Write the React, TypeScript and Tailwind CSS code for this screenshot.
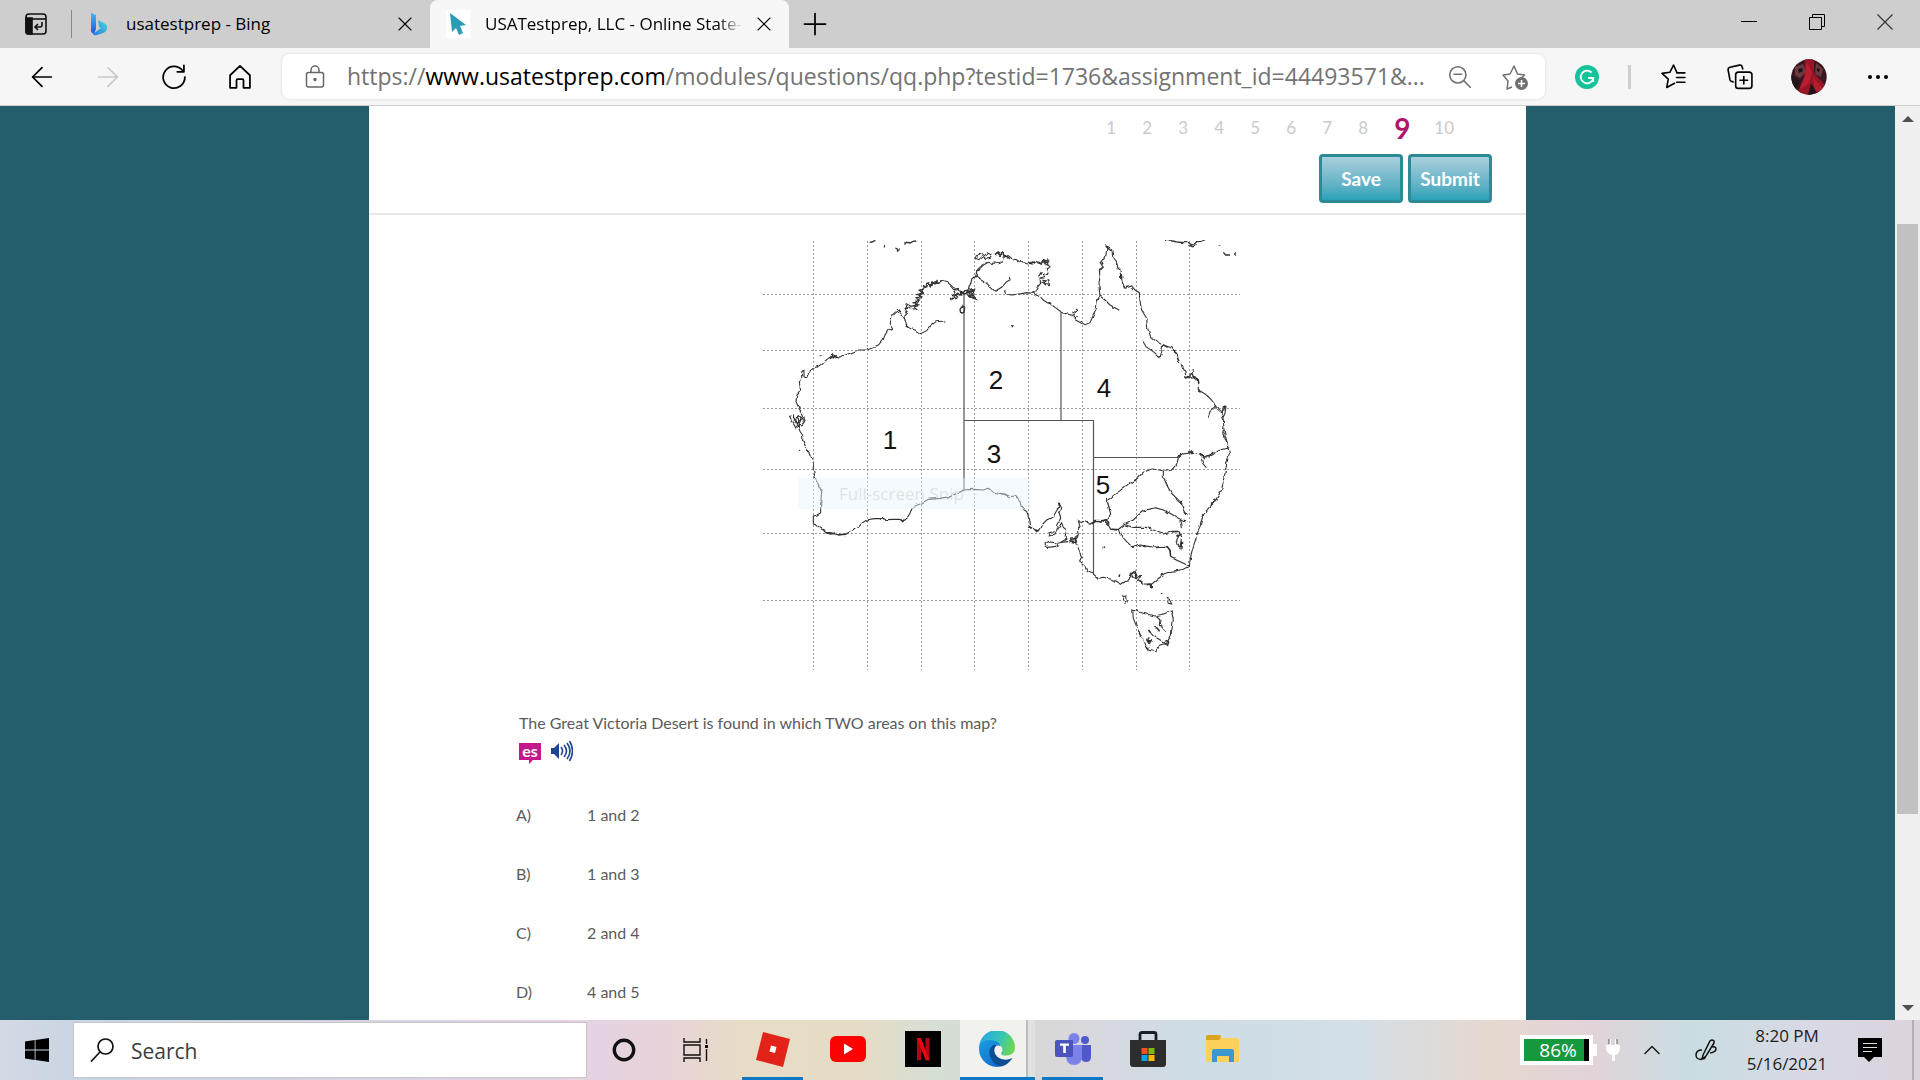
import React from "react";
import { ArrowLeft, ArrowRight, ChevronUp } from "lucide-react";

const ui = "font-['Open_Sans','Noto_Sans',sans-serif]";

function Stroke({ children, className = "size-7", label }: { children: React.ReactNode; className?: string; label?: string }) {
  return (
    <svg viewBox="0 0 24 24" className={className} fill="none" stroke="currentColor" strokeWidth="1.5" strokeLinecap="round" strokeLinejoin="round" aria-label={label} aria-hidden={!label}>
      {children}
    </svg>
  );
}

function TabStrip() {
  return (
    <header className="flex h-12 shrink-0 items-stretch bg-[#cecece] text-black">
      <div className="flex w-18 items-center justify-end">
        <button aria-label="Tab actions" className="mr-6">
          <svg viewBox="0 0 22 22" className="size-[22px]" fill="none" stroke="#111" strokeWidth="1.6">
            <rect x="1" y="1" width="20" height="20" rx="3" />
            <path d="M1 6h20" />
            <path d="M1 5h6v16H3q-2 0-2-2z" fill="#111" />
            <path d="M17 9v3q0 2-2 2h-5m3-3-3 3 3 3" />
          </svg>
        </button>
        <span className="h-7 w-px bg-[#888]" />
      </div>
      <div className="flex w-[358px] items-center">
        <svg viewBox="0 0 18 24" className="ml-[18px] h-6 w-[18px]">
          <defs>
            <linearGradient id="bingA" x1="0" y1="0" x2="0" y2="1">
              <stop offset="0" stopColor="#48b5f5" />
              <stop offset="1" stopColor="#1b56e0" />
            </linearGradient>
            <linearGradient id="bingB" x1="1" y1="0" x2="0" y2="1">
              <stop offset="0" stopColor="#46dfd0" />
              <stop offset="1" stopColor="#2376ea" />
            </linearGradient>
          </defs>
          <path d="M1 1l5 2v14l-2 5q-3-1-3-4z" fill="url(#bingA)" />
          <path d="M8 8l6 3q4 2 3 6-1 3-4 4l-6 2q-3 1-4-1l8-6-2-1z" fill="url(#bingB)" />
        </svg>
        <span className="ml-[18px] flex-1 truncate text-[17px]">usatestprep - Bing</span>
        <button aria-label="Close tab" className="mr-4">
          <Stroke className="size-[18px]"><path d="M4 4l16 16M20 4L4 20" /></Stroke>
        </button>
      </div>
      <div className="flex w-[359px] items-center rounded-t-lg bg-[#f7f7f7]">
        <span className="ml-4 grid h-7 w-6 place-items-center bg-white">
          <svg viewBox="0 0 18 24" className="h-6 w-[18px]">
            <path d="M1 1l16 12-6 1 3 7-4 2-3-7-4 4z" fill="#2a9db5" />
          </svg>
        </span>
        <span className="ml-[15px] w-[258px] text-[17px] whitespace-nowrap [mask-image:linear-gradient(to_right,black_90%,transparent)]">
          USATestprep, LLC - Online State-
        </span>
        <button aria-label="Close tab" className="ml-3">
          <Stroke className="size-[18px]"><path d="M4 4l16 16M20 4L4 20" /></Stroke>
        </button>
      </div>
      <button aria-label="New tab" className="ml-3">
        <Stroke><path d="M12 3v18M3 12h18" /></Stroke>
      </button>
      <div className="mr-px ml-auto flex items-center pb-1">
        <button aria-label="Minimize" className="grid w-[68px] place-items-center">
          <svg viewBox="0 0 16 16" className="size-4" stroke="#000"><path d="M0 7.5h16" /></svg>
        </button>
        <button aria-label="Restore" className="grid w-[68px] place-items-center">
          <svg viewBox="0 0 16 16" className="size-4" stroke="#000" fill="none"><path d="M.5 3.5h12v12H.5zM3.500 3.500V.5h12v12h-3" /></svg>
        </button>
        <button aria-label="Close" className="grid w-[68px] place-items-center">
          <svg viewBox="0 0 16 16" className="size-4" stroke="#333" strokeWidth="1.200"><path d="M.5.5l15 15M15.500.5l-15 15" /></svg>
        </button>
      </div>
    </header>
  );
}

function Toolbar() {
  return (
    <nav className="flex h-[58px] shrink-0 items-center border-b border-[#cfcfcf] bg-[#f6f6f6] text-black">
      <div className="flex w-[282px] items-center pl-[9px]">
        <button aria-label="Back" className="grid w-[66px] place-items-center"><ArrowLeft className="size-8" strokeWidth={1.3} /></button>
        <button aria-label="Forward" className="grid w-[66px] place-items-center text-[#c9c9c9]"><ArrowRight className="size-8" strokeWidth={1.3} /></button>
        <button aria-label="Refresh" className="grid w-[66px] place-items-center">
          <Stroke><path d="M20 7.500A9.300 9.300 0 1 0 21.300 12M20.500 2v5.500h-5.700" /></Stroke>
        </button>
        <button aria-label="Home" className="grid w-[66px] place-items-center">
          <Stroke><path d="M3.500 10.500L12 2.500l8.500 8v10.800h-5.500v-6.500q0-1-1-1h-4q-1 0-1 1v6.500H3.500z" /></Stroke>
        </button>
      </div>
      <div className="flex h-[45px] flex-1 items-center rounded-lg bg-white shadow-[0_0_3px_rgba(0,0,0,0.12)]">
        <svg viewBox="0 0 20 24" className="ml-[23px] h-6 w-5 shrink-0" fill="none" stroke="#666" strokeWidth="1.500">
          <rect x="1.500" y="7.500" width="17" height="14.500" rx="2" />
          <path d="M6 7.500V5a4 4 0 0 1 8 0v2.500" />
          <circle cx="10" cy="14.500" r="1" fill="#666" />
        </svg>
        <div role="textbox" aria-label="Address" className="ml-[22px] flex-1 text-[23px] whitespace-nowrap text-[#737373]">
          https://<span className="text-black">www.usatestprep.com</span>/modules/questions/qq.php?testid=1736&amp;assignment_id=44493571&amp;...
        </div>
        <button aria-label="Zoom out" className="mr-7 text-[#707070]">
          <Stroke className="size-[26px]"><circle cx="10" cy="10" r="7.500" /><path d="M15.500 15.500l6 6M6.500 9.500h7" /></Stroke>
        </button>
        <button aria-label="Add to favorites" className="mr-4 text-[#707070]">
          <svg viewBox="0 0 28 28" className="size-7" fill="none" stroke="currentColor" strokeWidth="1.500" strokeLinejoin="round">
            <path d="M11 24l-5 2 1-8-5-6 7-1 4-8 3.500 8 7 1-3 3" />
            <circle cx="20.500" cy="20.500" r="6.500" fill="currentColor" stroke="none" />
            <path d="M20.500 17v7M17 20.500h7" stroke="#fff" />
          </svg>
        </button>
      </div>
      <div className="flex w-[375px] items-center">
        <button aria-label="Grammarly" className="ml-[30px]">
          <svg viewBox="0 0 24 24" className="size-6"><circle cx="12" cy="12" r="12" fill="#15c39a" /><path d="M16.500 7.500A6.300 6.300 0 1 0 18 14M13 13h5.300v4" fill="none" stroke="#fff" strokeWidth="1.800" /></svg>
        </button>
        <span className="ml-[29px] h-6 w-[3px] bg-[#cfcfcf]" />
        <button aria-label="Favorites" className="ml-[30px]">
          <Stroke className="size-[25px]"><path d="M13 18.500L5.500 22.500 7 14.500 1 9l7.500-1L12 1l3 6.500M15 8.500h8M15 13h8M15 17.500h8" /></Stroke>
        </button>
        <button aria-label="Collections" className="ml-[41px]">
          <Stroke className="size-[26px]"><rect x="8" y="7.500" width="15" height="15" rx="2.500" /><path d="M15.500 11.500v7M12 15h7M5.500 16.500L4 16Q3 15.500 2.700 14.500L1 5.500Q.8 3.500 2.700 3L11.500 1q2-.3 2.500 1.500l.5 2" /></Stroke>
        </button>
        <button aria-label="Profile" className="ml-[38px]">
          <svg viewBox="0 0 36 36" className="size-9">
            <clipPath id="face"><circle cx="18" cy="18" r="17.700" /></clipPath>
            <g clipPath="url(#face)">
              <path d="M0 0h36v36H0z" fill="#3a1720" />
              <path d="M14 0h9l0 14 11 12-8 10H6l7-18z" fill="#961626" />
              <path d="M16 2l5 12-3 10-10 7 6-14zM22 18l10 12-8 3z" fill="#b81e2f" />
              <path d="M4 8l8-3 3 8-6 6-5-3zM25 4l7 6-2 8-6-3z" fill="#6a3a40" />
              <path d="M7 10l4-1 1 3-4 2zM26 9l3 1-1 3-2-1z" fill="#1c1013" />
              <path d="M0 16l9 6-4 10-6-5zM20 24l6 10-9 2z" fill="#22151a" />
            </g>
          </svg>
        </button>
        <button aria-label="Settings and more" className="ml-[41px]">
          <svg viewBox="0 0 20 6" className="h-[6px] w-5"><circle cx="2" cy="3" r="2" /><circle cx="10" cy="3" r="2" /><circle cx="18" cy="3" r="2" /></svg>
        </button>
      </div>
    </nav>
  );
}

function AustraliaMap() {
  const vertical = [814, 868, 922, 975, 1029, 1083, 1137, 1190];
  const horizontal = [294, 350, 408, 469, 533, 600];
  const labels: [string, number, number][] = [["1", 890, 449], ["2", 996, 389], ["3", 994, 463], ["4", 1104, 397], ["5", 1103, 494]];
  return (
    <svg viewBox="761 240 480 431" className="h-[431px] w-[480px]" fill="none" role="img" aria-label="Map of Australia with five numbered areas">
      <filter id="coastline" filterUnits="userSpaceOnUse" x="740" y="220" width="520" height="460">
        <feTurbulence type="fractalNoise" baseFrequency="0.2" numOctaves="1" seed="4" />
        <feDisplacementMap in="SourceGraphic" scale="4" xChannelSelector="R" yChannelSelector="G" />
      </filter>
      <g stroke="#999" strokeDasharray="2 2">
        {vertical.map((x) => <path key={x} d={`M${x - 0.5} 241V670`} />)}
        {horizontal.map((y) => <path key={y} d={`M763 ${y}.5H1240`} />)}
      </g>
      <path stroke="#555" strokeWidth="1.200" d="M964 293V490M964 420.500H1093.500V574M1061 313V420.500M1093.500 457.500H1178" />
      <g filter="url(#coastline)">
      {/* West and south-west coast */}
      <g transform="translate(750 230) scale(.33333)" stroke="#333" strokeWidth="3.300">
        <path d="M642 188l-12-4-8-6-7 2-10-12-15-13-15-4-10 7-10-3-10 10-10-3-10 10-10 6 5 12-12 5 7 10-17 5 4 10-10 8 8 8-15 2-10-8-9 10 6 10-10 10 4 15 4 13 10 7 15 5 17 11 18-9 15-17 13-10 25-2M466 270l-8-12-10-18-13 10-10 12-4 18 7 15-13 5-10 15-5 13-15 17-20 10-15 5-25 0-14 5-11 5-20 7-15 5-15-7-12 8-18 14-15 12-15 6-12 10-8 17-8-5 0-15-7 7 0 18-7 10 4 25-12 15-2 18 10 22 7 10 10 25-10 15-7-10 5-12-8-8-8 12 8 18-7 8-10-18-10-20M145 592l6 14 7 9 0 14 4 11 10 20 10 20 8 20 0 20 5 20 8 20 12 25-3 35 0 28-12 8-10 2 0 24 10 3 12 10 10 4 8 9 10 0 10 4 12-1 13 3 10-2 10-4 10-6 10-7 10-3 10-12 15-10 25-4 25 0 10 3 20-1 20 0 8 6 10-6 12-18 6-18 24-10 25-14 35-3 30-5 42-20 28-2 30 2 15-5 15 10 15 5 15 2 20 8" />
        <path strokeWidth="4" d="M575 151l-8 8-6-7-6 10-8-6-5 12-9-8-3 11-12-4 2 10-12 4 10 7-14 6 12 7-17 2 8 8-14 7 12 6-22 5-14-7-4 12 9 8-8 8M600 208l12-7 8 7 4-18 8 8 0-14 18-3 14 4 10-7-6 15 10 14-18-7-10-8M612 182l6 15-12-4M630 238l6-9 8 4-2 14-10 2zM128 556l8 18 10 16 6-12-12-15 14-3 8 14M238 382l6 4 3-12 3 10 8-6M355 37l11-1 10-5M402 46l3 3M436 54l5 2 2 5 6-2M463 43l9-6 9 2 7-5 11-1M209 377h3M148 660l2 2M230 907l10 5 12-3 14 6 20-2M390 867h10M452 868l6 7 4-6" />
      </g>
      {/* Northern coast and Cape York */}
      <g transform="translate(960 230) scale(.33333)" stroke="#333" strokeWidth="3.300">
        <path d="M45 88l5-14 12-5 12 8 8-8 14 6-5 10-14 3-9-8-12 9-10-5M105 75l8-9 8 8 8-6 3 10 10-3 10 7 6 8 10-2 10 8 10-1 12 4 10-3 8 6 10-7 10 2 6 6 6-15 8 4-5 10 13-9-5 12 9 6-11 5 5 14-14 3 4 10-14 4 2 13-8 10-7 15-10 5-15-2-15 2-15 3-20 2-12-5-6-10M130 80l-4 18-11 3-10-2-10 1-10-3-15 8-10 10-10 10-2 14 12 7 15 10 15 13 15 15 20-12 15-17 10-5-2-12M48 138l-13 12-5 15-5 10 10 5-5 5 10 10-12 3 17 9M0 188h30M215 185l12 9 13 6 10 10 12 8 10 4 13 10 18 13 17 7 18 4 12 14 25 14 15-6 8-18 10-20 4-25 8-17-2-18-1-20 3-20-2-22 12-6-8-12 8-10 8-15 2-17-2-13 12 5 8 10 4 25 8 10 0 15 10 10 2 20 6 20 7 15 20-7 10 12 13 8 2 27 5 25 15 25 3 30 9 25 18 15 18 10 22 7 18 13 4 20 13 20 10 20 3 20 17-5 20 12 0 28 25 15 15 15 13 20 17 15 5 25 2 30 8 35 5 20M420 198l15 12 15 15 28 16M548 332l10 18 22 15 20 18 5-18 3-20M768 530l-18 15-5 15M785 555l5-25 8 0-3 20-7 15" />
        <path strokeWidth="4" d="M55 74l8-5M105 73l7-5 8 9 9-8 5 12 10-7M140 80l10 6M175 94l10 2M204 101l20-2M232 98l10 3 8-11 6 6 9-8M256 104l12 2M250 150l7 3 9-3 2 16-12-2-6-6 10-3M236 140l8-14M60 118l-10 8M50 130l-2 12M352 240l-8 7-7-2 7 11M351 261h3M154 287l3-3 3 6h-5M440 45l8 14 10 4M425 104l6-8M428 112l-7 8M470 100l3 12M484 132l2 16M608 343l15 9M640 360l12 10-4 8M652 378l3 14M665 402l4 10M677 444l12-6 6-10 6 14 14 7 2 12M698 418l3 4M716 478l5 10M785 545l4 16M795 526l-4 16M615 31l20 2 18 3 20 2 12-1 9 7 10-3 6-6 16-1 8-5M776 47l5 2M790 67l7 8 13 0M822 72h6M0 188l14 4 12-6 8 14 15 6M25 176l-4 10 20-4M688 46l10 4 12-6" />
      </g>
      {/* South-east coast, rivers and Tasmania */}
      <g transform="translate(1000 430) scale(.33333)" stroke="#333" strokeWidth="3.300">
        <path d="M0 190l15 2 15 8 15-2 15 17 5 20 15 10 8 20 4 25 8 5 10 10 8-7 7-13 15-15 20-10 8-15 10-15-3-15 10 20-7 15 4 15-12 20 2 15-7 12-17 6 2-10 15-3M172 300l13-22 5 14 10 8-5 20 3 8-18 10M135 342l10-7 20 3 7 7-7 5-25 2zM172 340l28-5 15-5 13 5-3-13 10-7-3-15 8-10-5-17 20 2 15 8 15-12 25 1 10-2 12-18-4-15-6-25 18-15 20-15 25-20 25-15 20-20 25-10 25 3 12 4 23-4 15-18 5-18 15-12 30-5 20 5 15 15 20-10 15-13 35-10M225 335l10 20 5 15 5 10-7 15 17 15 7 15 18 7 15 13 15-3 25 6 27 15 23-13 10-10-5-8 15-7 3 15 12 5 5-10-10 15 17 12 18 0 2 13 3-13 15-12 15-12 15-13 30-3 20-4 18-10 4-28 6-25 10-30 2-15 10-20 5-20 5-15 15-20 15-15 10-15 15-25 5-30 5-20 5-30 8-30-6-25-7-20-7-15 2-10M600 70l8 30 10 12M490 122l0 18 10 25 15 25 20 20 10 10 5 20 10 18M312 272l13 13 7 13 23 0 20-16 25-12 15-15 15-12 35-10 25 7 20 10 20 12 15 8 13 2M540 270l5 28M375 285l25 7 40 0 25 10 25 10 30-7 15 0 10 15-5 35-10-25 8-15M355 298l5 14 20 23 18 17 22-7 30 5 25 2 25-4 10 12 2 22 56 26M398 540l32 10 35 8 25-6 25-9 5 27-5 30-7 25-8 15-20 5-12 20-23-5-10-20-15-25-10-25-10-25zM468 558l12 12-2 15 17 20M445 600l15 18 30 17M372 499l8-1 2 17-7 5-5-8zM500 505l8 3 7 14-10-2z" />
        <path strokeWidth="4.500" d="M45 199l8 8M88 288l10 8M105 300l12 2M175 213l4 10M210 328l16-2 3 9-14 0M233 290l2 10M273 283l14-12M297 272l12 0 10-4 8 16M335 298l16 2M320 206l6 4M308 350l4 3M359 433l-2 8M388 438l14-12 8 10-10 6 12 3M418 440l8-5M440 464l12-2 2 12M482 436l6-4M588 308h8M606 258l4-6M633 224l20-16M640 205l6 8M535 80l8-7M565 66l14-1M600 70l14 12 18-8 8-8M512 305l22-1M541 213l4 10M552 246l6 8M396 350l10-2M425 348l12 2M470 353l12-3 20 0 8 12 2 16M530 320l10-6M534 350l9 4 2-20M513 600v12M488 638l12-6 6 4-4 12-8-8M448 622l-5 7 6 10 4-7-6 0M436 650l10 6M463 592l8 2 8 10M446 600l5 8M419 610l6 4M485 489v3M515 543l3 5" />
      </g>
      </g>
      <g fill="#111" fontFamily="Liberation Sans, Arial, sans-serif" fontSize="26" textAnchor="middle">
        {labels.map(([t, x, y]) => <text key={t} x={x} y={y}>{t}</text>)}
      </g>
    </svg>
  );
}

const pageNumbers = ["1", "2", "3", "4", "5", "6", "7", "8"];
const answers = [["A)", "1 and 2"], ["B)", "1 and 3"], ["C)", "2 and 4"], ["D)", "4 and 5"]];
const action = "h-[49px] w-[84px] rounded border-[3px] border-[#2f8a98] bg-linear-to-b from-[#a9cfde] to-[#27a2b8] pt-px text-[19px] font-bold text-white";

function QuestionPage() {
  return (
    <main className="flex min-h-0 flex-1 bg-[#245e6c]">
      <div className="min-w-0 flex-1 overflow-hidden">
        <div className="mx-auto min-h-full w-full max-w-[1157px] bg-white font-['Lato','Noto_Sans',sans-serif] text-[#5b5b5b]">
          <div className="flex flex-col items-end border-b-2 border-[#e8e8e8] pr-[34px] pb-[10px]">
            <ol className="mr-[38px] mb-1 flex h-11 items-center text-[17px] text-[#cacaca]">
              {pageNumbers.map((n) => <li key={n} className="w-[36px] text-center">{n}</li>)}
              <li className="w-[42px] text-center text-[28px] font-bold text-[#b0156c]">9</li>
              <li className="ml-[11px]">10</li>
            </ol>
            <div className="flex gap-[5px]">
              <button className={action}>Save</button>
              <button className={action}>Submit</button>
            </div>
          </div>
          <div className="pr-10 pl-[147px]">
            <div className="relative mx-auto mt-[25px] w-fit">
              <AustraliaMap />
              <div className="absolute top-[238px] left-[37px] h-[31px] w-[232px] bg-[#e6f5fc]/45 pl-[41px] font-['Open_Sans',sans-serif] text-[17px] leading-[31px] whitespace-nowrap text-[#999]/25">
                Full-screen Snip
              </div>
            </div>
            <p className="mt-10 ml-[3px] text-base leading-6">The Great Victoria Desert is found in which TWO areas on this map?</p>
            <div className="mt-1 ml-[3px] flex h-6 items-center gap-[9px]">
              <button aria-label="Spanish" className="relative h-[17px] w-[22px] bg-[#c6168d] text-base leading-[14px] font-bold text-white">
                es
                <span className="absolute -bottom-1 left-[10px] border-t-4 border-r-4 border-t-[#c6168d] border-r-transparent" />
              </button>
              <button aria-label="Read aloud">
                <svg viewBox="0 0 23 22" className="h-[22px] w-[23px]" fill="none" stroke="#1f4494" strokeWidth="1.600">
                  <path d="M1 8h3l5-5v16l-5-5H1z" fill="#1f4494" stroke="none" />
                  <path d="M11 7q3 4 0 8M14 5q5 6 0 12M17 3q6 8 0 16M19.500 1q6 10 0 20" />
                </svg>
              </button>
            </div>
            <ul className="mt-[22px] text-base">
              {answers.map(([k, v]) => (
                <li key={k} className="flex h-[59px] items-center">
                  <span className="w-[71px]">{k}</span>
                  <span>{v}</span>
                </li>
              ))}
            </ul>
          </div>
        </div>
      </div>
      <div className="flex w-[25px] flex-col items-center bg-[#f0f0f0]">
        <svg viewBox="0 0 12 6" className="mt-[10px] h-[6px] w-3"><path d="M0 6l6-6 6 6z" fill="#505050" /></svg>
        <div className="mt-[102px] h-[590px] w-[21px] bg-[#c1c1c1]" />
        <svg viewBox="0 0 12 6" className="mt-auto mb-[9px] h-[6px] w-3"><path d="M0 0l6 6 6-6z" fill="#505050" /></svg>
      </div>
    </main>
  );
}

function AppButton({ label, children, running, active }: { label: string; children: React.ReactNode; running?: boolean; active?: boolean }) {
  return (
    <button aria-label={label} className={`flex w-[75px] flex-col items-center ${active ? "bg-[linear-gradient(90deg,#f1f1ee_66px,#b9bdbb_66px,#b9bdbb_68px,#e0e2e0_68px)]" : ""}`}>
      <span className={`flex flex-1 items-center ${active ? "pr-[2px]" : ""}`}>{children}</span>
      <span className={`h-[3px] ${active ? "w-full" : "w-[61px]"} ${running || active ? "bg-[#0d78c6]" : ""}`} />
    </button>
  );
}

function Taskbar() {
  return (
    <footer className="flex h-[60px] shrink-0 items-stretch bg-[linear-gradient(90deg,#d4d9e5_0%,#c7d4e2_5%,#e5d3e2_31%,#e7d3dc_34%,#e8dcc5_39%,#e5dcc6_45%,#d5dfd5_49%,#d8d8d6_53%,#d8d8df_57%,#cedce6_62%,#d2dfe8_70%,#e6d8cf_78%,#e2d3da_83%,#c9dde1_88%,#d7d9e5_94%,#dcd3dc_100%)] text-[#1c1c1c]">
      <button aria-label="Start" className="grid w-[73px] place-items-center">
        <svg viewBox="0 0 24 24" className="size-6"><path d="M0 3.500L9.700 2v9.500H0zM10.500 1.900L24 0v11.500H10.500zM0 12.400h9.700V22L0 20.600zM10.500 12.400H24V24l-13.500-1.900z" fill="#000" /></svg>
      </button>
      <label className="my-[2px] flex w-[514px] items-center border border-[#c6c6c6] bg-white">
        <svg viewBox="0 0 24 24" className="ml-4 size-6" fill="none" stroke="#111" strokeWidth="1.700"><circle cx="15.500" cy="8.500" r="7.500" /><path d="M10 14L1 23.500" /></svg>
        <input type="search" aria-label="Search" placeholder="Search" className="mt-1 ml-[17px] w-80 text-[21px] outline-none placeholder:text-[#3c3c3c]" />
      </label>
      <button aria-label="Cortana" className="grid w-[74px] place-items-center">
        <svg viewBox="0 0 24 24" className="size-6"><ellipse cx="12" cy="12" rx="9.700" ry="9.700" fill="none" stroke="#111" strokeWidth="3.400" /></svg>
      </button>
      <button aria-label="Task View" className="grid w-[74px] place-items-center pr-1">
        <svg viewBox="0 0 26 24" className="h-6 w-[26px]" fill="none" stroke="#111" strokeWidth="1.400"><path d="M1 0v4h16V0M1 24v-4h16v4M1 7h16v10H1zM23.500 1v5M23.500 11v12" /><path d="M22 7h3v3h-3z" fill="#111" stroke="none" /></svg>
      </button>
      <AppButton label="Roblox" running>
        <svg viewBox="0 0 34 36" className="h-9 w-[34px]"><path d="M7 1l27 7-7 28-27-7z" fill="#e2231a" /><path d="M15 14.500l5.500 1.500-1.500 6-5.500-1.500z" fill="#fff" /></svg>
      </AppButton>
      <AppButton label="YouTube">
        <svg viewBox="0 0 36 26" className="h-[26px] w-9"><rect width="36" height="26" rx="6" fill="#f00" /><path d="M14 7.500v11l9-5.500z" fill="#fff" /></svg>
      </AppButton>
      <AppButton label="Netflix">
        <svg viewBox="0 0 36 36" className="size-9"><path d="M0 0h36v36H0z" /><path d="M12 7h4v22l-4 .5zM20.500 7h4v22.500l-4-.5z" fill="#b1060f" /><path d="M12 7h4l8.500 22.500-4-.5z" fill="#e50914" /></svg>
      </AppButton>
      <AppButton label="Microsoft Edge" active>
        <svg viewBox="0 0 36 36" className="size-9">
          <defs>
            <linearGradient id="edgeTop" x1="0" y1="0.300" x2="1" y2="0.600"><stop offset="0" stopColor="#2ba4e6" /><stop offset=".55" stopColor="#35c5b4" /><stop offset="1" stopColor="#6fd84f" /></linearGradient>
            <linearGradient id="edgeMid" x1="0" y1="0" x2="0.600" y2="1"><stop offset="0" stopColor="#1b9de2" /><stop offset="1" stopColor="#1170cf" /></linearGradient>
          </defs>
          <path d="M0 18A18 18 0 0 1 36 16q0 8-8 8.500-6 .5-6-2.500 3-3 0-7-4-5-11-4Q4 12 0 18z" fill="url(#edgeTop)" />
          <path d="M0 18q1-9 11-9 8 0 11 6-7-2-8 5 0 9 8 15.500A18 18 0 0 1 0 18z" fill="url(#edgeMid)" />
          <path d="M14 14q-5 4-3 11 3 9 11 10.500 7-1.500 11.500-8.500-8 4-15-1-6-6-1-12z" fill="#0d4d92" />
        </svg>
      </AppButton>
      <AppButton label="Microsoft Teams" running>
        <svg viewBox="0 0 36 36" className="size-9">
          <circle cx="19" cy="7.500" r="5.500" fill="#7b83eb" /><circle cx="30" cy="9" r="4" fill="#5059c9" />
          <path d="M26 14h10v12q0 5-5 5-4 0-5-4z" fill="#5059c9" /><path d="M11 14h16v12q-1 8-8 8t-8-8z" fill="#7b83eb" />
          <path d="M2 9h15q1 0 1 1v15q0 1-1 1H2q-2 0-2-2V11q0-2 2-2z" fill="#4b53bc" /><path d="M5 12.500h9v2.300h-3.200V22H8.200v-7.200H5z" fill="#fff" />
        </svg>
      </AppButton>
      <AppButton label="Microsoft Store">
        <svg viewBox="0 0 36 36" className="size-9"><path d="M10 10V3.500Q10 1.500 12 1.500h12q2 0 2 2V10" fill="none" stroke="#1b1f26" strokeWidth="2.800" /><path d="M0 9h36v24q0 3-3 3H3q-3 0-3-3z" fill="#2d2d2d" /><path d="M11.500 17h6v6h-6z" fill="#f25022" /><path d="M18.500 17h6v6h-6z" fill="#7fba00" /><path d="M11.500 24h6v6h-6z" fill="#00a4ef" /><path d="M18.500 24h6v6h-6z" fill="#ffb900" /></svg>
      </AppButton>
      <AppButton label="File Explorer">
        <svg viewBox="0 0 34 28" className="h-7 w-[34px]"><path d="M0 2q0-2 2-2h11q2 0 3 3h15q2 0 2 2v22H2q-2 0-2-2z" fill="#fbd15b" /><path d="M0 2q0-2 2-2h11q2 0 2 2l-2 3H0z" fill="#d9a520" /><path d="M6 27V16q0-2 2-2h18q2 0 2 2v11h-5v-6H11v6z" fill="#3f97cf" /></svg>
      </AppButton>
      <div className="ml-auto flex items-center">
        <div className="flex items-center">
          <div className="flex h-[30px] w-[73px] border-4 border-white bg-black">
            <span className="w-[60px] bg-[#16983f] pl-2 text-center text-[19px] leading-[22px] text-white">86%</span>
          </div>
          <span className="h-3 w-1 bg-white" />
        </div>
        <svg viewBox="0 0 14 24" className="ml-[9px] h-6 w-[14px]" fill="#fff"><path d="M3 1h2v6h4V1h2v6h3v4q-1 5-5 6v6H6v-6q-5-1-6-6V7h3z" /><path d="M3 1v5M11 1v5" stroke="#555" /></svg>
        <button aria-label="Show hidden icons" className="ml-[18px]"><ChevronUp className="size-7" strokeWidth={1.300} /></button>
        <button aria-label="Windows Ink" className="ml-[28px]">
          <svg viewBox="0 0 24 24" className="size-6" fill="none" stroke="#111" strokeWidth="1.500"><path d="M9 17l7-14q2-2 4 0v2L12 18l-4 3zM8 12q-6 0-6 5t6 4q4 0 3-3M17 9q5-1 5 2t-6 4" /></svg>
        </button>
        <button className="ml-[9px] w-[120px] text-center text-[17px] leading-7">8:20 PM<br />5/16/2021</button>
        <button aria-label="Notifications" className="ml-[11px]">
          <svg viewBox="0 0 24 24" className="size-6"><path d="M0 0h24v19h-8l-5 5-5-5H0z" /><path d="M5 5.500h14M5 9.500h14M5 13.500h9" stroke="#ddd" /></svg>
        </button>
        <span className="ml-[30px] h-[60px] w-[8px] border-l-2 border-[#b5adb5]" />
      </div>
    </footer>
  );
}

export default function App() {
  return (
    <div className={`flex h-screen min-w-[1280px] flex-col overflow-hidden ${ui}`}>
      <TabStrip />
      <Toolbar />
      <QuestionPage />
      <Taskbar />
    </div>
  );
}
